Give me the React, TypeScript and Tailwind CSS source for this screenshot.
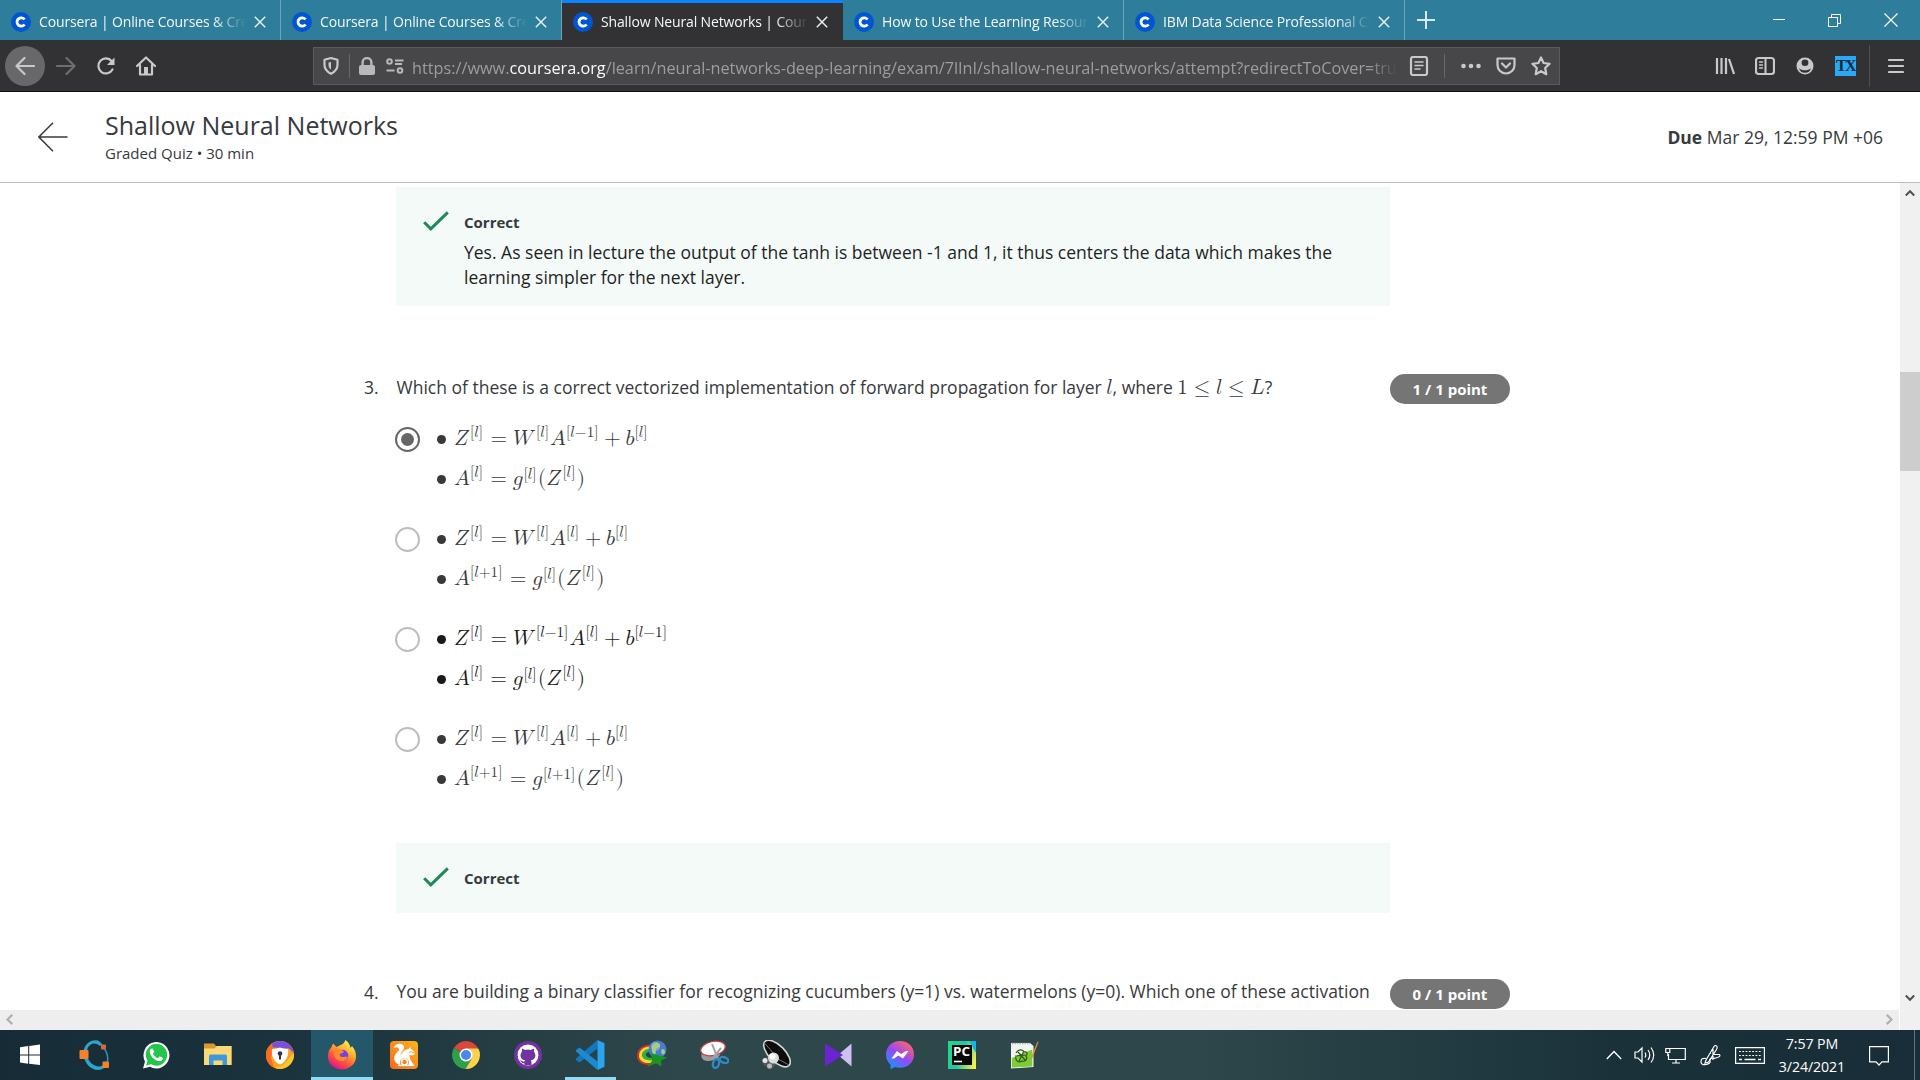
import React from "react";

type Kids = { children?: React.ReactNode };

/* ---------- Browser chrome ---------- */

const tabs = [
  { title: "Coursera | Online Courses & Credentials", active: false },
  { title: "Coursera | Online Courses & Credentials", active: false },
  { title: "Shallow Neural Networks | Coursera", active: true },
  { title: "How to Use the Learning Resources", active: false },
  { title: "IBM Data Science Professional Certificate", active: false },
];

function Favicon() {
  return (
    <svg viewBox="0 0 20 20" className="size-5 shrink-0">
      <circle cx="10" cy="10" r="10" fill="#0056d2" />
      <path d="M13.600 12.500a4.200 4.200 0 1 1 0-5" fill="none" stroke="#fff" strokeWidth="2.800" />
    </svg>
  );
}

function Tab({ title, active }: { title: string; active: boolean }) {
  return (
    <div
      className={
        active
          ? "flex h-[41px] w-[281px] shrink-0 items-center border-t-[3px] border-[#0a84ff] bg-[#323234] pl-[11px]"
          : "flex h-10 w-[281px] shrink-0 items-center border-r border-[#6da6ba] pl-[11px] pt-[3px]"
      }
    >
      <Favicon />
      <div className="ml-2 w-[207px] overflow-hidden whitespace-nowrap text-[14px] leading-5 tracking-[-0.14px] text-[#f4f9fa] [mask-image:linear-gradient(to_right,black_84%,transparent_100%)]">
        {title}
      </div>
      <svg viewBox="0 0 12 12" className="ml-2 size-3 shrink-0">
        <path d="M.8.8l10.400 10.400M11.200.8L.8 11.200" stroke="#e3eff2" strokeWidth="1.500" />
      </svg>
    </div>
  );
}

function TabBar() {
  return (
    <div className="flex h-10 bg-[#2e7d9a]">
      {tabs.map((t, i) => (
        <Tab key={i} {...t} />
      ))}
      <div className="flex w-[41px] items-center justify-center">
        <svg viewBox="0 0 18 18" className="size-[18px]">
          <path d="M9 0v18M0 9h18" stroke="#d5eaf1" strokeWidth="2" />
        </svg>
      </div>
      <div className="ml-auto flex items-center gap-[43px] pr-[22px] text-white">
        <svg viewBox="0 0 12 12" className="size-3">
          <path d="M0 5.500h12" stroke="currentColor" />
        </svg>
        <svg viewBox="0 0 13 13" className="size-[13px]" fill="none" stroke="currentColor">
          <path d="M.5 3.500h9v9h-9zM3.500 3.500v-3h9v9h-3" />
        </svg>
        <svg viewBox="0 0 14 14" className="size-[14px]">
          <path d="M.5.5l13 13M13.500.5l-13 13" stroke="currentColor" strokeWidth="1.200" />
        </svg>
      </div>
    </div>
  );
}

function NavIcon({ children }: Kids) {
  return (
    <svg
      viewBox="0 0 20 20"
      className="size-5 shrink-0"
      fill="none"
      stroke="#c9c9cb"
      strokeWidth="2.200"
      strokeLinecap="round"
      strokeLinejoin="round"
    >
      {children}
    </svg>
  );
}

function UrlBar() {
  return (
    <div className="ml-[157px] flex h-[38px] w-[1247px] items-center border border-[#5b5b5d] bg-[#474749] pl-[7px]">
      <NavIcon>
        <path d="M10 2l6.500 1.800v5c0 4-2.500 7-6.500 9-4-2-6.500-5-6.500-9v-5z" />
        <path d="M10 6v7.500c-1.600-1-2.500-2.400-2.500-4.500V6.500z" fill="#c9c9cb" stroke="none" />
      </NavIcon>
      <div className="ml-[8px] h-6 w-px bg-[#68686a]" />
      <svg viewBox="0 0 16 18" className="ml-[9px] h-[18px] w-4">
        <rect x="0" y="8" width="16" height="10" rx="2" fill="#b9b9bb" />
        <path d="M3.600 9V5.500a4.400 4.400 0 0 1 8.800 0V9" fill="none" stroke="#b9b9bb" strokeWidth="2.400" />
      </svg>
      <svg viewBox="0 0 18 16" className="ml-[11px] h-4 w-[18px]" fill="none" stroke="#b9b9bb" strokeWidth="2">
        <circle cx="3.500" cy="3.500" r="2.300" />
        <circle cx="14" cy="12.500" r="2.300" />
        <path d="M9 2.500h8.500M9 6h7M.5 12.500h8" />
      </svg>
      <div className="ml-[8px] mt-[4px] w-[986px] overflow-hidden whitespace-nowrap text-[16.25px] leading-6 text-[#9d9d9f] [mask-image:linear-gradient(to_right,black_97%,transparent_100%)]">
        https://www.<span className="text-[#fbfbfe]">coursera.org</span>
        /learn/neural-networks-deep-learning/exam/7lInI/shallow-neural-networks/attempt?redirectToCover=true
      </div>
      <div className="ml-[11px]">
        <NavIcon>
          <rect x="2" y="1" width="16" height="18" rx="2" />
          <path d="M6 6h8M6 9.500h8M6 13h5" strokeWidth="1.500" />
        </NavIcon>
      </div>
      <div className="ml-[15px] h-6 w-px bg-[#68686a]" />
      <div className="ml-[16px] flex items-center gap-[15px]">
        <NavIcon>
          <g fill="#c9c9cb" stroke="none">
            <circle cx="2.500" cy="10" r="2.300" />
            <circle cx="10" cy="10" r="2.300" />
            <circle cx="17.500" cy="10" r="2.300" />
          </g>
        </NavIcon>
        <NavIcon>
          <path d="M1.500 2.500h17v6.500a8.500 8.500 0 0 1-17 0z" />
          <path d="M6 7.500l4 4 4-4" />
        </NavIcon>
        <NavIcon>
          <path d="M10 1.500l2.600 5.500 6 .8-4.400 4.200 1.100 6.200-5.300-3-5.300 3 1.100-6.200L1.400 7.800l6-.8z" />
        </NavIcon>
      </div>
    </div>
  );
}

function NavBar() {
  return (
    <div className="flex h-[52px] items-center border-b border-[#0c0c0d] bg-[#323234] pl-[5px]">
      <div className="flex size-10 items-center justify-center rounded-full bg-[#68686a]">
        <NavIcon>
          <path d="M19 10H2M9.500 2L1.500 10l8 8" />
        </NavIcon>
      </div>
      <div className="ml-[11px] opacity-40">
        <NavIcon>
          <path d="M1 10h17M10.500 2l8 8-8 8" />
        </NavIcon>
      </div>
      <div className="ml-5">
        <NavIcon>
          <path d="M16.500 13.500a7.500 7.500 0 1 1-.8-8.300" />
          <path d="M18.500 1.500v7.500h-7.500z" fill="#c9c9cb" stroke="none" />
        </NavIcon>
      </div>
      <div className="ml-5">
        <NavIcon>
          <path d="M1 10l9-8.500 9 8.500M4 9v9.500h12V9" />
          <path d="M8 11h4v7H8z" fill="#c9c9cb" stroke="none" />
        </NavIcon>
      </div>
      <UrlBar />
      <div className="ml-auto flex items-center gap-5 pr-[16px]">
        <NavIcon>
          <path d="M2 2v16M6.500 2v16M11 2v16M14 3l5 15" strokeLinecap="butt" />
        </NavIcon>
        <NavIcon>
          <rect x="1" y="2" width="18" height="16" rx="2.500" />
          <path d="M10.500 3v14" strokeWidth="2" />
          <path d="M4.500 6h3M4.500 9h3M4.500 12h3" strokeWidth="1.300" />
        </NavIcon>
        <NavIcon>
          <circle cx="10" cy="10" r="8.500" fill="#c9c9cb" stroke="none" />
          <ellipse cx="10" cy="6.800" rx="3.400" ry="3.300" fill="#323234" stroke="none" />
          <path d="M4 12.200c3 2.800 9 2.800 12 0-.8 3.300-3 4.500-6 4.500s-5.200-1.200-6-4.500z" fill="#323234" stroke="none" />
        </NavIcon>
        <div className="flex h-5 w-[21px] items-center justify-center bg-[#2aa9f5] font-['Liberation_Serif',serif] text-[16px] font-bold leading-5 tracking-[-1.5px] text-[#12283a]">
          TX
        </div>
        <div className="-ml-[7px] flex items-center gap-[18px]">
          <div className="h-[42px] w-px bg-[#4f4f51]" />
          <svg viewBox="0 0 16 16" className="size-4">
            <path d="M1 2h14M1 8h14M1 14h14" stroke="#c9c9cb" strokeWidth="2.200" strokeLinecap="round" />
          </svg>
        </div>
      </div>
    </div>
  );
}

/* ---------- Math ---------- */

const h = React.createElement;
const Mi = ({ children }: Kids) => h("mi", null, children);
const Op = ({ children }: Kids) => h("mo", { stretchy: "false" }, children);
const TightOp = ({ children }: Kids) => h("mo", { stretchy: "false", lspace: "0", rspace: "0" }, children);
const Mn = ({ children }: Kids) => h("mn", null, children);
const Gap = ({ width }: { width: string }) => h("mspace", { width });

function MathText({ children }: Kids) {
  return h(
    "math",
    { className: "font-['Latin_Modern_Math','Liberation_Serif',serif] text-[21.1px]" },
    children,
  );
}

/* Room for the overhang of slanted capitals, before and after the superscript. */
const lead: Record<string, string> = { Z: "0.11em", W: "0.2em", A: "0.01em", b: "0em", g: "0.04em" };

/* A variable with a layer index in brackets, e.g. A^[l-1]. */
function Layer({ name, shift, gap }: { name: string; shift?: "+" | "−"; gap?: boolean }) {
  return h(
    React.Fragment,
    null,
    h(
      "msup",
      null,
      <Mi>{name}</Mi>,
      h(
        "mrow",
        { className: "translate-y-[2px] text-[0.72em]" },
        <Gap width={lead[name]} />,
        <TightOp>[</TightOp>,
        <Mi>l</Mi>,
        shift ? <TightOp>{shift}</TightOp> : null,
        shift ? <Mn>1</Mn> : null,
        <TightOp>]</TightOp>,
      ),
    ),
    gap ? <Gap width="0.03em" /> : null,
  );
}

function BigParen({ children }: Kids) {
  return h("mo", { stretchy: "false", lspace: "0", rspace: "0", className: "text-[1.05em]" }, children);
}

type Shift = "+" | "−" | undefined;
type Option = { w?: Shift; a?: Shift; b?: Shift; out?: Shift; g?: Shift; checked?: boolean; hovered?: boolean };

const options: Option[] = [
  { a: "−", checked: true },
  { out: "+" },
  { w: "−", b: "−", hovered: true },
  { out: "+", g: "+" },
];

function BulletLine({ children }: Kids) {
  return (
    <li className="flex h-10 items-center">
      <span className="mr-[8px] size-[9px] rounded-full bg-current" />
      <span className="leading-10">{children}</span>
    </li>
  );
}

function OptionRow({ o }: { o: Option }) {
  return (
    <div className="flex">
      <div
        className={
          o.checked
            ? "mt-[8px] flex size-[25px] items-center justify-center rounded-full border-[2.5px] border-[#666]"
            : "mt-[8px] size-[25px] rounded-full border-[2.5px] border-[#bdbdbd]"
        }
      >
        {o.checked && <div className="size-[13px] rounded-full bg-[#666]" />}
      </div>
      <ul className={o.hovered ? "ml-[17px] text-[#1a1a1a]" : "ml-[17px] text-[#373a3c]"}>
        <BulletLine>
          <MathText>
            <Layer name="Z" gap />
            <Op>=</Op>
            <Layer name="W" shift={o.w} />
            <Layer name="A" shift={o.a} />
            <Op>+</Op>
            <Layer name="b" shift={o.b} />
          </MathText>
        </BulletLine>
        <BulletLine>
          <MathText>
            <Layer name="A" shift={o.out} gap />
            <Op>=</Op>
            <Layer name="g" shift={o.g} />
            <BigParen>(</BigParen>
            <Layer name="Z" />
            <BigParen>)</BigParen>
          </MathText>
        </BulletLine>
      </ul>
    </div>
  );
}

/* ---------- Quiz ---------- */

function Header() {
  return (
    <header className="flex h-[91px] justify-between border-b border-[#bdbdbd] bg-white pl-[38px] pr-[37px] text-[#373a3c]">
      <div className="flex">
        <svg viewBox="0 0 30 30" className="mt-[30px] size-[30px]" fill="none" stroke="#373a3c" strokeWidth="1.500">
          <path d="M29.500 15H1M15 .8L.9 15 15 29.200" />
        </svg>
        <div className="ml-[37px] pt-[18px]">
          <h1 className="text-[25px] leading-[30px]">Shallow Neural Networks</h1>
          <p className="mt-[3px] text-[15px] leading-5">Graded Quiz • 30 min</p>
        </div>
      </div>
      <div className="pt-[33px] text-[17.5px] leading-[25px]">
        <b>Due</b> Mar 29, 12:59 PM +06
      </div>
    </header>
  );
}

function Feedback({ children }: Kids) {
  return (
    <div className="ml-[396px] flex w-[994px] bg-[#f3faf8] pb-4 pl-[27px] pt-[25px]">
      <svg viewBox="0 0 26 20" className="-mt-px h-5 w-[26px] shrink-0">
        <path d="M1.200 11.200l6.600 6.600L24.800 1.400" fill="none" stroke="#208759" strokeWidth="3" />
      </svg>
      <div className="ml-[15px]">
        <p className="h-5 text-[15px] font-bold leading-5 text-[#373a3c]">Correct</p>
        {children}
      </div>
    </div>
  );
}

function Question({ n, score, children }: Kids & { n: number; score: string }) {
  return (
    <div className="flex pl-[364px] text-[17.5px] leading-[25px] text-[#373a3c]">
      <div className="w-[32.5px]">{n}.</div>
      <div className="w-[993.5px] whitespace-nowrap">{children}</div>
      <div className="-mt-px h-[30px] w-[120px] rounded-full bg-[#757575] text-center text-[15px] font-bold leading-[31px] text-white">
        {score}
      </div>
    </div>
  );
}

function Quiz() {
  return (
    <main className="h-[827px] w-[1899px] overflow-hidden bg-white pt-1">
      <div className="h-[119px]">
        <Feedback>
          <p className="mt-[8px] w-[880px] text-[17.5px] leading-[25px] text-[#1f1f1f]">
            Yes. As seen in lecture the output of the tanh is between -1 and 1, it thus centers the data which makes the
            learning simpler for the next layer.
          </p>
        </Feedback>
      </div>
      <div className="mt-[69px] h-[25px]">
        <Question n={3} score="1 / 1 point">
          Which of these is a correct vectorized implementation of forward propagation for layer{" "}
          <MathText>
            <Mi>l</Mi>
          </MathText>
          , where{" "}
          <MathText>
            <Mn>1</Mn>
            <Op>≤</Op>
            <Mi>l</Mi>
            <Op>≤</Op>
            <Mi>L</Mi>
          </MathText>
          ?
        </Question>
      </div>
      <div className="ml-[395px] mt-[19px] flex flex-col gap-5">
        {options.map((o, i) => (
          <OptionRow key={i} o={o} />
        ))}
      </div>
      <div className="ml-[396px] mt-11 h-[70px] w-[994px] bg-[#f3faf8]">
        <div className="-ml-[396px]">
          <Feedback />
        </div>
      </div>
      <div className="mt-[67px]">
        <Question n={4} score="0 / 1 point">
          <p className="-mt-px">
            You are building a binary classifier for recognizing cucumbers (y=1) vs. watermelons (y=0). Which one of
            these activation
          </p>
        </Question>
      </div>
    </main>
  );
}

function Chevron({ className }: { className: string }) {
  return (
    <svg viewBox="0 0 10 10" className={className} fill="none" stroke="currentColor" strokeWidth="2">
      <path d="M.8 7.500L5 3.200l4.200 4.300" />
    </svg>
  );
}

function VerticalScrollbar() {
  return (
    <div className="ml-px flex w-5 flex-col items-center bg-[#f0f0f0] text-[#505050]">
      <Chevron className="mt-[5px] size-[10px]" />
      <div className="mt-[174px] h-[99px] w-full bg-[#cdcdcd]" />
      <Chevron className="mb-[27px] mt-auto size-[10px] rotate-180" />
    </div>
  );
}

function HorizontalScrollbar() {
  return (
    <div className="flex h-5 w-[1899px] items-center justify-between bg-[#eeeeee] px-[4px] pb-px text-[#b0b0b0]">
      <Chevron className="size-[11px] -rotate-90" />
      <Chevron className="size-[11px] rotate-90" />
    </div>
  );
}

/* ---------- Taskbar ---------- */

function Ico({ children }: Kids) {
  return (
    <svg viewBox="0 0 30 30" className="size-[30px]" fill="none">
      {children}
    </svg>
  );
}

const WindowsIcon = (
  <Ico>
    <path d="M3 7.300l8.200-1.200v8.300H3zM12.200 6L23 4.500v9.900H12.200zM3 15.400h8.200v8.300L3 22.500zM12.200 15.400H23V25l-10.800-1.300z" fill="#fff" />
  </Ico>
);
const OctaveIcon = (
  <Ico>
    <path d="M17 .2C9 .2 3.500 6.500 4.500 15S12 30 19 30c3 0 6-1.500 8-4l-2-2c-1.500 1.800-3 2.500-5 2.500-5.500 0-11-5-12-11.500S10.500 3.500 15 3.500c2 0 4 .8 6 2.500l2.500-1.500C21.500 1.800 19.500.2 17 .2z" fill="#2fa3cd" />
    <path d="M24 7c4 4.500 5.800 10 4 16.500" stroke="#2795c4" strokeWidth="1.600" />
    <rect x=".5" y="10" width="9" height="9" rx="1" fill="#f5812a" />
    <rect x="22" y="4.500" width="5" height="5" rx="1" fill="#d8683a" />
    <rect x="23.500" y="21.500" width="6.500" height="6.500" rx="1" fill="#f5812a" />
  </Ico>
);
const WhatsAppIcon = (
  <Ico>
    <path d="M2 28.500l2-7A13 13.200 0 1 1 9 26.700z" fill="#fff" />
    <path d="M5 25.500l1.500-4.800a10.700 10.900 0 1 1 3.600 3.500z" fill="#25c44c" />
    <path d="M11.500 8.600c-.9-.7-2.500.6-2.700 2.300-.3 5.200 5.600 10.300 10.100 10.200 1.900-.2 3.200-1.600 3-3.100l-3.300-1.700-1.700 1.900c-2.300-.8-4-2.500-5-4.700l1.400-1.700z" fill="#fff" />
  </Ico>
);
const FolderIcon = (
  <Ico>
    <path d="M1 3.500h10l2 2.500h15.500v19H1z" fill="#d99a2b" />
    <path d="M1 8.500h10.500L14 6h14.500v19H1z" fill="#fbd977" />
    <path d="M6 25V16q0-1.500 1.500-1.500h15Q24 14.500 24 16v9h-4.500v-4.500h-9V25z" fill="#3f97dc" />
  </Ico>
);
const PrivacyIcon = (
  <Ico>
    <circle cx="15" cy="15" r="14" fill="#f7a122" />
    <path d="M8 3A14 14 0 0 0 9 27.700L6 18 8 8l3-5z" fill="#fb6b22" />
    <path d="M15 1a14 14 0 0 1 13.800 12L24 8.500 8 7.500 7 3.700A14 14 0 0 1 15 1z" fill="#7a4fe0" />
    <path d="M28.800 13A14 14 0 0 1 10 28l8-3z" fill="#f5c72c" />
    <path d="M15 7.500c3 1.500 5.500 1.500 8 1.500 1 7-2 13-8 15.500C9 22 6 16 7 9c2.500 0 5 0 8-1.500z" fill="#fff" />
    <circle cx="15" cy="13.500" r="2.300" fill="#343050" />
    <path d="M15 13v6.500" stroke="#343050" strokeWidth="2" />
  </Ico>
);
const FirefoxIcon = (
  <Ico>
    <defs>
      <linearGradient id="fox" x1="24" y1="2" x2="8" y2="28" gradientUnits="userSpaceOnUse">
        <stop stopColor="#fff44f" />
        <stop offset=".35" stopColor="#ffb02e" />
        <stop offset=".65" stopColor="#ff5a38" />
        <stop offset="1" stopColor="#e31587" />
      </linearGradient>
    </defs>
    <path d="M4.500 7L6 3.500 9.500 7l3-1.500C15 5 17.500 3 18.500 0c3.500 2.500 4.500 5.500 5 8l1.500-2c3.300 4 4.500 8 3.800 12.500A14 13 0 0 1 15 29.500C7 29.500 1 24 1 16.500c0-4 1.200-7.500 3.500-9.500z" fill="url(#fox)" />
    <circle cx="15.500" cy="15.500" r="5.800" fill="#7543e5" />
    <path d="M4.500 9.500c3-2 7-1.500 9.500.5l3 1.200c-.5 1.800-2.500 2-4 2.600-1 1.700.2 3.700 3 3.200 2.300-.3 4-.5 5 .2-2 3.800-6 5-9.500 3.300-3.500-1.700-5.500-6-4-9z" fill="#ff8a2b" />
  </Ico>
);
const UcIcon = (
  <Ico>
    <defs>
      <linearGradient id="uc" x1="1" y1="29" x2="29" y2="1" gradientUnits="userSpaceOnUse">
        <stop stopColor="#f56a1d" />
        <stop offset="1" stopColor="#fdb41c" />
      </linearGradient>
    </defs>
    <rect x="1" y="1" width="28" height="28" rx="4" fill="url(#uc)" />
    <path d="M4.500 8C6 3 13.500 2 15 6.500c1 3.500-3.500 5-3.500 8.500 2-3 4-5.500 8-6l2-2 .5 2.300c3.300 1.500 4.500 4.200 3 5.700-1.300.7-3.500 0-5 .5.500 1.500 1.500 2.500 1.500 4.500L25 25h-5.500c1.500-4-.5-7-4-7s-5.500 3-4 7C7 24 4.500 20.500 5.500 16.500 6.500 13 10 11.500 10 9 9.500 7 7 6.800 4.500 8z" fill="#fff" />
    <circle cx="15.500" cy="22" r="3" stroke="#fff" strokeWidth="1.500" />
    <path d="M9 25.500h16" stroke="#fff" strokeWidth="1.200" />
    <path d="M20 12.500c1.500-1 3.500-1 5 .5" stroke="#f98b1d" strokeWidth=".9" />
  </Ico>
);
const ChromeIcon = (
  <Ico>
    <path d="M15 15L2.900 8A14 14 0 0 1 27.100 8z" fill="#d9483b" />
    <path d="M15 15h-1L2.900 8A14 14 0 0 0 14.500 29l6-10z" fill="#2da04c" />
    <path d="M15 15V8.500h12.400A14 14 0 0 1 14.500 29l6-10z" fill="#fdd14b" />
    <circle cx="15" cy="15" r="6.500" fill="#fff" />
    <circle cx="15" cy="15" r="5" fill="#4a86ee" />
  </Ico>
);
const GithubIcon = (
  <Ico>
    <circle cx="15" cy="15" r="14" fill="#73339d" />
    <circle cx="15" cy="15" r="10.500" fill="#fff" />
    <path d="M9.200 8.500l3 1.500a9 9 0 0 1 5.600 0l3-1.500.4 3.500c2.500 3.500 1 7.800-3.500 8.500.8.800.9 1.500.9 4.500h-7.200v-1.800c-2.800.5-2.900-1.700-4.400-2.500 2-.6 2.300 1.500 4.500.9 0-.4.300-.8.700-1.100-4.500-.7-6-5-3.500-8.500z" fill="#73339d" />
  </Ico>
);
const VsCodeIcon = (
  <Ico>
    <path d="M22.500 0v8.500L4.500 22.500 1 20v-1.500z" fill="#1277bd" />
    <path d="M22.500 30v-8.500L4.500 7.500 1 10v1.500z" fill="#1b8ad2" />
    <path d="M22.500 0L29.500 3.200v23.600L22.500 30z" fill="#2aa4ee" />
  </Ico>
);
const IdmIcon = (
  <Ico>
    <g transform="rotate(-8 12 15)">
      <path d="M18 6C8 2 0 8 0 15s8 12 19 9z" fill="#d93030" />
      <path d="M18 7.500C9 4.500 2 9 2 15s7 9.500 17 7.500z" fill="#f2dc2d" />
      <path d="M18 10C11 7.500 5 10 5 14.500s6 7 14 6z" fill="#35ad45" />
      <path d="M18 12c-5-1-9 0-9 2.500s5 4.500 10 4z" fill="#24424a" />
    </g>
    <circle cx="20.500" cy="9.500" r="9" fill="#4a7bd0" />
    <circle cx="18.500" cy="6.500" r="4.500" fill="#86b8ee" opacity=".7" />
    <path d="M15 6c2-4 7-4 8-1s-3 2-4 4 1 4-1 5-4-3-3-8zM25 9c2 0 3 1 3 3s-2 3-3 2-1-4 0-5z" fill="#a8cf78" />
    <path d="M14 13.500L30.500 17.500l-6.500 3 .5 6-6-3.500L10 27l5-6z" fill="#17961e" />
  </Ico>
);
const SnipIcon = (
  <Ico>
    <ellipse cx="12" cy="14" rx="10" ry="6.500" transform="rotate(-20 12 14)" fill="#9c9c9e" />
    <ellipse cx="14" cy="8.500" rx="12.500" ry="7" transform="rotate(-12 14 8.500)" fill="#fff" stroke="#c64040" strokeWidth="1.300" />
    <path d="M13 4l6 15M22 8l-9 11" stroke="#9aa4ab" strokeWidth="2" />
    <ellipse cx="17" cy="23.500" rx="3" ry="4.500" transform="rotate(15 17 23.500)" stroke="#2d8bc7" strokeWidth="2.300" />
    <ellipse cx="25" cy="20" rx="4.500" ry="2.800" transform="rotate(20 25 20)" stroke="#2d8bc7" strokeWidth="2.300" />
  </Ico>
);
const SpeakerIcon = (
  <Ico>
    <path d="M1 20l8-5 7 8-5 6c-3 1-5 0-5-3-3 0-5-2-5-6z" fill="#55595b" />
    <ellipse cx="16" cy="13.500" rx="17" ry="8" transform="rotate(45 16 13.500)" fill="#0c0c0c" stroke="#d3d5d6" strokeWidth="1.600" />
    <path d="M3 2.500L13 14M28 25l-11-6" stroke="#6f7375" />
    <circle cx="12.500" cy="18" r="5.500" fill="#d9dbdc" />
    <circle cx="11.500" cy="16.500" r="3" fill="#fff" />
    <circle cx="4" cy="20.500" r="2.500" fill="#e3e5e6" />
    <circle cx="8.500" cy="26" r="2.500" fill="#b9bcbe" />
  </Ico>
);
const ClipIcon = (
  <Ico>
    <path d="M28.500 3.500v23L15 15z" fill="#cfc0f3" />
    <path d="M2 3.500L20 15 2 26.500z" fill="#6a25d0" />
  </Ico>
);
const MessengerIcon = (
  <Ico>
    <defs>
      <linearGradient id="msg" x1="6" y1="28" x2="24" y2="3" gradientUnits="userSpaceOnUse">
        <stop stopColor="#1696ff" />
        <stop offset=".5" stopColor="#9648f5" />
        <stop offset="1" stopColor="#ff6271" />
      </linearGradient>
    </defs>
    <path d="M15 1C7 1 1 6.500 1 14.500c0 4.500 1.700 7.500 4.500 10v4.800l4.500-2.300c1.600.5 3.200.8 5 .8 8 0 14-5.500 14-13.300S23 1 15 1z" fill="url(#msg)" />
    <path d="M6.500 18.500l5.500-7.500 4 3 5-3h2.500L18 18.500l-4.500-3-4.500 3z" fill="#fff" />
  </Ico>
);
const PyCharmIcon = (
  <Ico>
    <defs>
      <linearGradient id="pyc" x1="1" y1="10" x2="29" y2="20" gradientUnits="userSpaceOnUse">
        <stop stopColor="#21d789" />
        <stop offset=".45" stopColor="#21c8a5" />
        <stop offset="1" stopColor="#f1ee50" />
      </linearGradient>
    </defs>
    <rect x="1" y="1" width="28" height="28" fill="url(#pyc)" />
    <path d="M22 1h7v12z" fill="#12b5e8" />
    <rect x="5" y="5" width="20" height="20" fill="#080808" />
    <path d="M7 21.500h8" stroke="#fff" strokeWidth="1.600" />
    <text x="6" y="16" fill="#fff" fontSize="12.500" fontWeight="700" fontFamily="Open Sans, sans-serif" textLength="17" lengthAdjust="spacingAndGlyphs">
      PC
    </text>
  </Ico>
);
const NotepadIcon = (
  <Ico>
    <path d="M2 3h19l3.500 3v21L2 28.500z" fill="#f2f5ee" />
    <path d="M2.800 18l20.500-8.500v17L2.800 27.500z" fill="#7ecb35" />
    <path d="M3 3.500h18" stroke="#a9b3b5" strokeWidth="1.500" strokeDasharray="1.500 1" />
    <path d="M7 13c2-4 7-4 8-1 3-1 4 2 2 4 2 3-1 6-4 5-3 2-7 0-6-4M9 12l7 8M15 11l-5 10M6 16l12-1" stroke="#2c5a1c" strokeWidth="1.200" />
    <path d="M28.500 1.500L22 17l-.5 2.500 2-1.800L29.500 2z" fill="#e29138" />
  </Ico>
);

const apps = [
  { icon: WindowsIcon, state: "" },
  { icon: OctaveIcon, state: "" },
  { icon: WhatsAppIcon, state: "" },
  { icon: FolderIcon, state: "" },
  { icon: PrivacyIcon, state: "" },
  { icon: FirefoxIcon, state: "active" },
  { icon: UcIcon, state: "" },
  { icon: ChromeIcon, state: "" },
  { icon: GithubIcon, state: "" },
  { icon: VsCodeIcon, state: "open" },
  { icon: IdmIcon, state: "" },
  { icon: SnipIcon, state: "" },
  { icon: SpeakerIcon, state: "" },
  { icon: ClipIcon, state: "" },
  { icon: MessengerIcon, state: "" },
  { icon: PyCharmIcon, state: "" },
  { icon: NotepadIcon, state: "" },
];

function Tray() {
  return (
    <div className="ml-auto flex items-center text-white">
      <svg viewBox="0 0 16 10" className="h-[10px] w-4" fill="none" stroke="currentColor" strokeWidth="1.400">
        <path d="M.8 9L8 1.500 15.200 9" />
      </svg>
      <svg viewBox="0 0 22 18" className="ml-[12px] h-[18px] w-[22px]" fill="none" stroke="currentColor" strokeWidth="1.200">
        <path d="M1 6h3l4-4v14l-4-4H1z" />
        <path d="M11 6.500q1.500 2.500 0 5M14 4q3.500 5 0 10M17 1.500q5.500 7.500 0 15" />
      </svg>
      <svg viewBox="0 0 21 17" className="ml-[9px] h-[17px] w-[21px]" fill="none" stroke="currentColor" strokeWidth="1.200">
        <path d="M5 1.500h15.300v11H3.500V7M11 12.500V16M7 16h8" />
        <path d="M.8 1.500h4v4h-4zM2.800 5.500V9" />
      </svg>
      <svg viewBox="0 0 22 22" className="ml-[14px] h-[22px] w-[22px]" fill="none" stroke="currentColor" strokeWidth="1.200">
        <path d="M6 16L14 2.500q1.500-2 3 0 .5 1.500-.5 3L8.500 18l-3.500 1zM13 5v11M11 9l-2 1" />
        <path d="M6 14.500q-5-1-5 3t5 3 4-4 5-2M14 10.500h5.500q1.500 2-2 3l-4 1" />
      </svg>
      <svg viewBox="0 0 30 17" className="ml-[13px] h-[17px] w-[30px]" fill="none" stroke="currentColor" strokeWidth="1.200">
        <path d="M.6.6h28.800v15.800H.6z" />
        <path d="M4 4.500h22M4 8.500h22" strokeDasharray="1.800 1.500" />
        <path d="M4 12.500h3M9.500 12.500h11M23 12.500h3" strokeWidth="1.500" />
      </svg>
      <div className="ml-[13px] w-[68px] whitespace-nowrap text-center text-[14.2px] leading-[23px] tracking-[-0.1px]">
        <div>7:57 PM</div>
        <div>3/24/2021</div>
      </div>
      <svg viewBox="0 0 20 20" className="ml-[23px] mt-[2px] size-5" fill="none" stroke="currentColor" strokeWidth="1.200">
        <path d="M.6.6h18.800v15.200h-6.400L10 19l-3-3.200H.6z" />
      </svg>
      <div className="ml-[25px] mr-[5px] h-[50px] w-px bg-[#5f757b]" />
    </div>
  );
}

function Taskbar() {
  return (
    <div className="flex h-[50px] bg-[linear-gradient(to_right,#162b36_0px,#1b343d_320px,#2d474a_680px,#2d474a_1200px,#1a313a_1620px,#182d37_1920px)] pl-px">
      {apps.map((a, i) => (
        <div
          key={i}
          className={
            a.state === "active"
              ? "flex w-[62px] items-center justify-center border-b-[3px] border-[#91dbf5] bg-[#24576a] pt-[3px]"
              : a.state === "open"
                ? "flex w-[62px] items-center justify-center bg-[linear-gradient(#91dbf5,#91dbf5)] bg-[length:51px_3px] bg-[position:center_bottom] bg-no-repeat"
                : "flex w-[62px] items-center justify-center"
          }
        >
          {a.icon}
        </div>
      ))}
      <Tray />
    </div>
  );
}

export default function App() {
  return (
    <div className="flex h-[1080px] w-[1920px] flex-col overflow-hidden bg-white font-['Open_Sans','Noto_Sans',sans-serif]">
      <TabBar />
      <NavBar />
      <Header />
      <div className="flex h-[847px] bg-white">
        <div className="flex flex-col">
          <Quiz />
          <HorizontalScrollbar />
        </div>
        <VerticalScrollbar />
      </div>
      <Taskbar />
    </div>
  );
}
